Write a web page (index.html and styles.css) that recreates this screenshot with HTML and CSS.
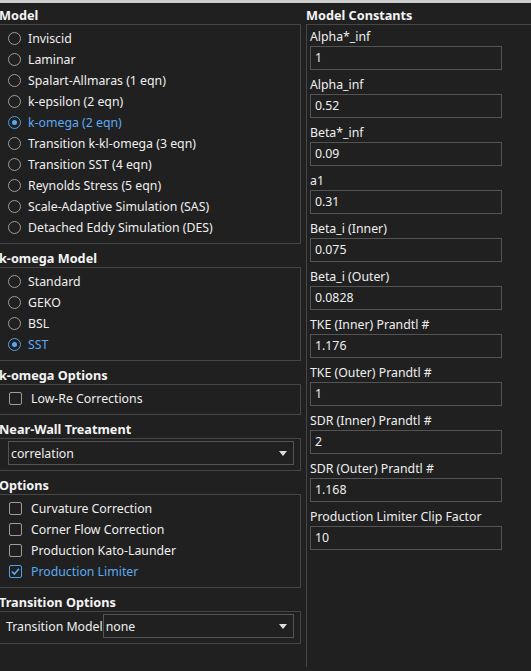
FILE: index.html
```html
<!DOCTYPE html>
<html>
<head>
<meta charset="utf-8">
<link rel="stylesheet" href="styles.css">
</head>
<body>
<div class="topbar"></div>
<div class="main">
  <div class="left">
    <section class="group">
      <div class="group-title">Model</div>
      <div class="group-box">
        <div class="opt"><span class="radio"></span>Inviscid</div>
        <div class="opt"><span class="radio"></span>Laminar</div>
        <div class="opt"><span class="radio"></span>Spalart-Allmaras (1 eqn)</div>
        <div class="opt"><span class="radio"></span>k-epsilon (2 eqn)</div>
        <div class="opt sel"><span class="radio on"></span>k-omega (2 eqn)</div>
        <div class="opt"><span class="radio"></span>Transition k-kl-omega (3 eqn)</div>
        <div class="opt"><span class="radio"></span>Transition SST (4 eqn)</div>
        <div class="opt"><span class="radio"></span>Reynolds Stress (5 eqn)</div>
        <div class="opt"><span class="radio"></span>Scale-Adaptive Simulation (SAS)</div>
        <div class="opt"><span class="radio"></span>Detached Eddy Simulation (DES)</div>
      </div>
    </section>
    <section class="group">
      <div class="group-title">k-omega Model</div>
      <div class="group-box">
        <div class="opt"><span class="radio"></span>Standard</div>
        <div class="opt"><span class="radio"></span>GEKO</div>
        <div class="opt"><span class="radio"></span>BSL</div>
        <div class="opt sel"><span class="radio on"></span>SST</div>
      </div>
    </section>
    <section class="group">
      <div class="group-title">k-omega Options</div>
      <div class="group-box">
        <div class="opt chk-opt"><span class="check"></span>Low-Re Corrections</div>
      </div>
    </section>
    <section class="group">
      <div class="group-title">Near-Wall Treatment</div>
      <div class="group-box combo-box">
        <div class="combo wide"><span>correlation</span><span class="arrow"></span></div>
      </div>
    </section>
    <section class="group">
      <div class="group-title">Options</div>
      <div class="group-box">
        <div class="opt chk-opt"><span class="check"></span>Curvature Correction</div>
        <div class="opt chk-opt"><span class="check"></span>Corner Flow Correction</div>
        <div class="opt chk-opt"><span class="check"></span>Production Kato-Launder</div>
        <div class="opt chk-opt sel"><span class="check on"><svg viewBox="0 0 13 13" width="13" height="13"><path d="M3 6.6 L5.4 9 L10 3.8" fill="none" stroke="#5aa8f0" stroke-width="1.6"/></svg></span>Production Limiter</div>
      </div>
    </section>
    <section class="group">
      <div class="group-title">Transition Options</div>
      <div class="group-box combo-box row">
        <span class="row-label">Transition Model</span>
        <div class="combo narrow"><span>none</span><span class="arrow"></span></div>
      </div>
    </section>
  </div>
  <div class="right">
    <div class="group-title">Model Constants</div>
    <div class="const-box">
      <div class="field"><div class="field-label">Alpha*_inf</div><div class="input">1</div></div>
      <div class="field"><div class="field-label">Alpha_inf</div><div class="input">0.52</div></div>
      <div class="field"><div class="field-label">Beta*_inf</div><div class="input">0.09</div></div>
      <div class="field"><div class="field-label">a1</div><div class="input">0.31</div></div>
      <div class="field"><div class="field-label">Beta_i (Inner)</div><div class="input">0.075</div></div>
      <div class="field"><div class="field-label">Beta_i (Outer)</div><div class="input">0.0828</div></div>
      <div class="field"><div class="field-label">TKE (Inner) Prandtl #</div><div class="input">1.176</div></div>
      <div class="field"><div class="field-label">TKE (Outer) Prandtl #</div><div class="input">1</div></div>
      <div class="field"><div class="field-label">SDR (Inner) Prandtl #</div><div class="input">2</div></div>
      <div class="field"><div class="field-label">SDR (Outer) Prandtl #</div><div class="input">1.168</div></div>
      <div class="field"><div class="field-label">Production Limiter Clip Factor</div><div class="input">10</div></div>
    </div>
  </div>
</div>
</body>
</html>
```

FILE: styles.css
```css
html, body {
  margin: 0;
  padding: 0;
  background: #202020;
  height: 100%;
  overflow: hidden;
}
body {
  font-family: "Noto Sans", "Open Sans", sans-serif;
  font-size: 12.3px;
  color: #efefef;
}
.topbar {
  height: 3px;
  background: #cdcdcd;
}
.main {
  display: flex;
  align-items: flex-start;
}
.left {
  width: 303px;
  margin-left: -2px;
  flex: none;
}
.group {
  margin-top: 5px;
}
.group:first-child {
  margin-top: 3px;
}
.group-title {
  height: 18px;
  line-height: 18px;
  font-weight: bold;
  font-size: 12.7px;
  color: #f4f4f4;
  padding-left: 1px;
  white-space: nowrap;
}
.group-box {
  border: 1px solid #464646;
  padding: 3px 0 5px 9px;
}
.opt {
  height: 21px;
  display: flex;
  align-items: center;
  gap: 7px;
  white-space: nowrap;
}
.opt.sel {
  color: #5caaf2;
}
.radio {
  width: 11px;
  height: 11px;
  border: 1px solid #9c9c9c;
  border-radius: 50%;
  flex: none;
  position: relative;
}
.radio.on {
  border-color: #4f9fe6;
}
.radio.on::after {
  content: "";
  position: absolute;
  left: 3px;
  top: 3px;
  width: 5px;
  height: 5px;
  border-radius: 50%;
  background: #5aa8f0;
}
.chk-opt {
  gap: 9px;
  padding-left: 1px;
}
.check {
  width: 11px;
  height: 11px;
  border: 1px solid #9c9c9c;
  border-radius: 2px;
  flex: none;
  position: relative;
}
.check.on {
  border-color: #4f9fe6;
}
.check svg {
  position: absolute;
  left: -1px;
  top: -1px;
}
.combo-box {
  padding: 2px 6px 5px 9px;
}
.combo {
  height: 22px;
  border: 1px solid #545454;
  display: flex;
  align-items: center;
  justify-content: space-between;
  padding: 0 6px 0 2px;
  box-sizing: content-box;
}
.combo.narrow {
  width: 182px;
  margin-left: auto;
}
.arrow {
  width: 0;
  height: 0;
  border-left: 4px solid transparent;
  border-right: 4px solid transparent;
  border-top: 5px solid #dedede;
}
.row {
  display: flex;
  align-items: center;
  padding-left: 7px;
}
.row-label {
  white-space: nowrap;
}
.right {
  flex: 1;
  margin-left: 5px;
  margin-top: 3px;
}
.right .group-title {
  padding-left: 0;
}
.const-box {
  border: 1px solid #464646;
  border-right: none;
  border-bottom: none;
  padding: 3px 0 0 3px;
  height: calc(100vh - 28px);
  box-sizing: border-box;
}
.field {
  margin-bottom: 6px;
}
.field-label {
  height: 18px;
  line-height: 18px;
  white-space: nowrap;
}
.input {
  width: 186px;
  height: 22px;
  line-height: 22px;
  border: 1px solid #545454;
  padding-left: 4px;
}
```
